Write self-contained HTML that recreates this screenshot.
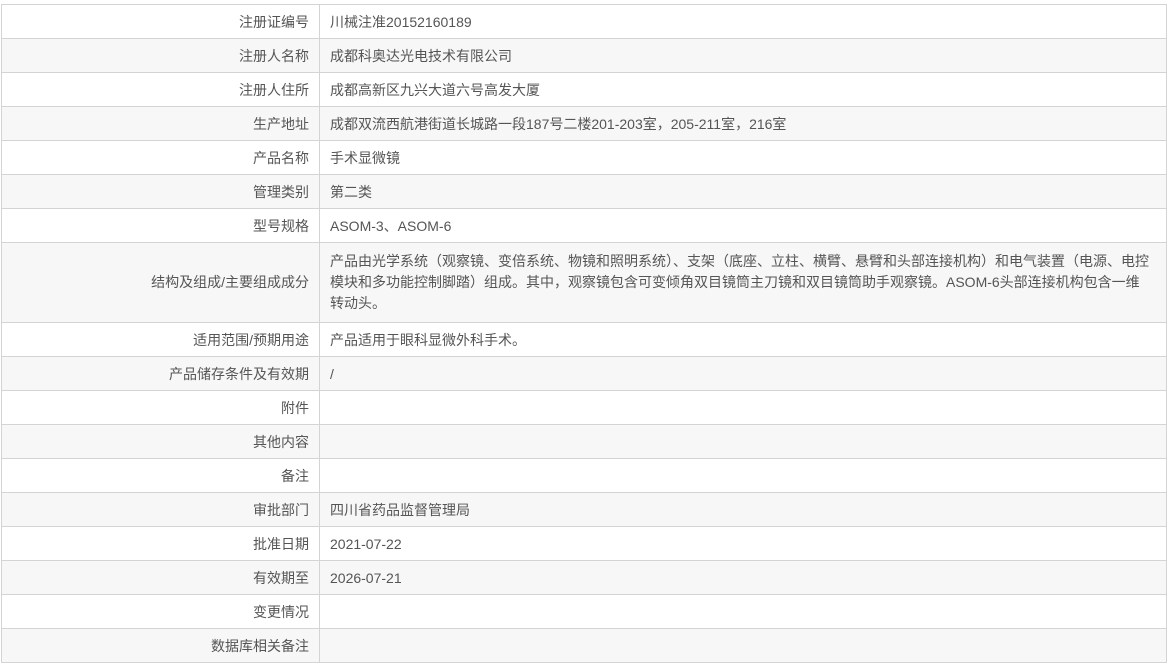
<!DOCTYPE html>
<html><head><meta charset="utf-8"><style>
body{margin:0;background:#fff;font-family:"Liberation Sans","Noto Sans CJK SC",sans-serif;font-size:14px;color:#555}
table{position:absolute;left:1px;top:4px;width:1166px;border-collapse:collapse}
td{border:1px solid #d4d4d4;height:34px;padding:0 10px;box-sizing:border-box}
td.l{width:318px;text-align:right;color:#555}
tr:nth-child(even) td{background:#f7f7f7}
td.m{height:80px;line-height:21px;padding:0 10px}
</style></head><body>
<table>
<tr><td class="l">注册证编号</td><td>川械注准20152160189</td></tr>
<tr><td class="l">注册人名称</td><td>成都科奥达光电技术有限公司</td></tr>
<tr><td class="l">注册人住所</td><td>成都高新区九兴大道六号高发大厦</td></tr>
<tr><td class="l">生产地址</td><td>成都双流西航港街道长城路一段187号二楼201-203室，205-211室，216室</td></tr>
<tr><td class="l">产品名称</td><td>手术显微镜</td></tr>
<tr><td class="l">管理类别</td><td>第二类</td></tr>
<tr><td class="l">型号规格</td><td>ASOM-3、ASOM-6</td></tr>
<tr><td class="l m">结构及组成/主要组成成分</td><td class="m">产品由光学系统（观察镜、变倍系统、物镜和照明系统）、支架（底座、立柱、横臂、悬臂和头部连接机构）和电气装置（电源、电控<br>模块和多功能控制脚踏）组成。其中，观察镜包含可变倾角双目镜筒主刀镜和双目镜筒助手观察镜。ASOM-6头部连接机构包含一维<br>转动头。</td></tr>
<tr><td class="l">适用范围/预期用途</td><td>产品适用于眼科显微外科手术。</td></tr>
<tr><td class="l">产品储存条件及有效期</td><td>/</td></tr>
<tr><td class="l">附件</td><td></td></tr>
<tr><td class="l">其他内容</td><td></td></tr>
<tr><td class="l">备注</td><td></td></tr>
<tr><td class="l">审批部门</td><td>四川省药品监督管理局</td></tr>
<tr><td class="l">批准日期</td><td>2021-07-22</td></tr>
<tr><td class="l">有效期至</td><td>2026-07-21</td></tr>
<tr><td class="l">变更情况</td><td></td></tr>
<tr><td class="l">数据库相关备注</td><td></td></tr>
</table>
</body></html>
